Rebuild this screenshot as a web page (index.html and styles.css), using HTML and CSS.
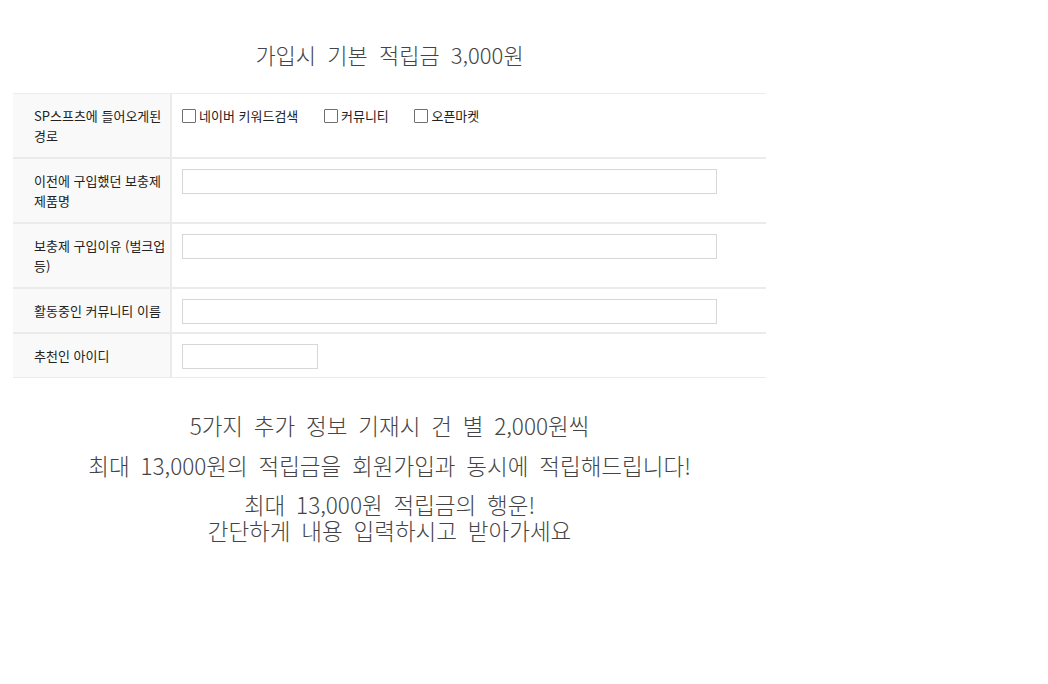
FILE: index.html
```html
<!DOCTYPE html>
<html lang="ko">
<head>
<meta charset="utf-8">
<title>추가 정보</title>
<link rel="stylesheet" href="styles.css">
</head>
<body>
<div class="wrap">
  <h2 class="title">가입시 기본 적립금 3,000원</h2>
  <table class="form">
    <colgroup>
      <col class="col-head">
      <col>
    </colgroup>
    <tr>
      <th>SP스프츠에 들어오게된<br>경로</th>
      <td class="checks">
        <label class="chk"><input type="checkbox"><span>네이버 키워드검색</span></label>
        <label class="chk"><input type="checkbox"><span>커뮤니티</span></label>
        <label class="chk"><input type="checkbox"><span>오픈마켓</span></label>
      </td>
    </tr>
    <tr>
      <th>이전에 구입했던 보충제<br>제품명</th>
      <td><input class="txt" type="text"></td>
    </tr>
    <tr>
      <th>보충제 구입이유 (벌크업<br>등)</th>
      <td><input class="txt" type="text"></td>
    </tr>
    <tr>
      <th>활동중인 커뮤니티 이름</th>
      <td><input class="txt" type="text"></td>
    </tr>
    <tr class="last">
      <th>추천인 아이디</th>
      <td><input class="txt short" type="text"></td>
    </tr>
  </table>
  <div class="info">
    <p class="l1">5가지 추가 정보 기재시 건 별 2,000원씩</p>
    <p class="l2">최대 13,000원의 적립금을 회원가입과 동시에 적립해드립니다!</p>
    <p class="l3">최대 13,000원 적립금의 행운!<br>간단하게 내용 입력하시고 받아가세요</p>
  </div>
</div>
</body>
</html>
```

FILE: styles.css
```css
html, body {
  margin: 0;
  padding: 0;
  background: #fff;
}
body {
  font-family: "Noto Sans CJK KR", "Noto Sans", sans-serif;
  color: #333;
}
.wrap {
  width: 753px;
  margin-left: 13px;
}
.title {
  margin: 0;
  padding: 39px 0 24px;
  font-size: 22px;
  line-height: 30px;
  font-weight: 300;
  text-align: center;
  color: #444;
  word-spacing: 5px;
}
.form {
  width: 753px;
  table-layout: fixed;
  border-collapse: collapse;
  border-top: 1px solid #ececec;
}
.col-head {
  width: 158px;
}
.form th,
.form td {
  border-bottom: 2px solid #ebebeb;
  vertical-align: top;
  font-size: 13px;
  line-height: 20px;
}
.form tr.last th,
.form tr.last td {
  border-bottom: 1px solid #ebebeb;
}
.form th {
  padding: 12px 0 11px 21px;
  background: #f9f9f9;
  border-right: 2px solid #ebebeb;
  text-align: left;
  font-weight: normal;
  color: #222;
  white-space: nowrap;
  overflow: visible;
}
.form td {
  padding: 10px 10px 8px;
}
.form td.checks {
  padding-top: 12px;
}
.chk {
  display: inline-flex;
  align-items: center;
  margin-right: 22px;
  color: #222;
}
.chk input {
  appearance: none;
  -webkit-appearance: none;
  width: 14px;
  height: 14px;
  margin: 0 3px 0 0;
  border: 1px solid #6f6f6f;
  background: #fff;
  border-radius: 1px;
}
.txt {
  display: block;
  box-sizing: border-box;
  width: 535px;
  height: 25px;
  margin: 0;
  padding: 0 4px;
  border: 1px solid #d7d7d7;
  background: #fff;
  font-family: inherit;
  font-size: 12px;
}
.txt.short {
  width: 136px;
}
.info {
  text-align: center;
  color: #444;
  font-size: 22.5px;
  font-weight: 300;
  word-spacing: 4.5px;
}
.info p {
  margin: 10px 0 0;
  line-height: 30px;
}
.info p.l1 {
  margin-top: 32px;
}
.info p.l3 {
  margin-top: 11px;
  line-height: 26px;
}
```
